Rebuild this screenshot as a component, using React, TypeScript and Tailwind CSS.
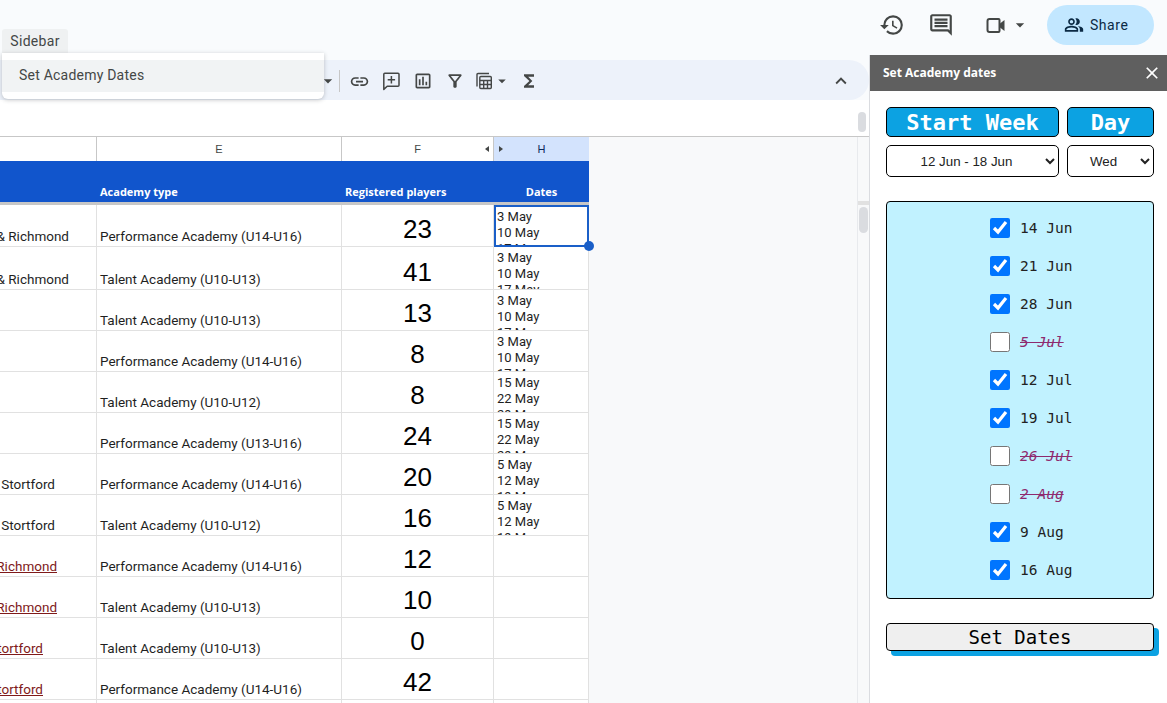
import React from "react";
import { MdHistory, MdOutlineComment, MdOutlinePeopleAlt, MdLink, MdOutlineAssessment, MdOutlineFilterAlt, MdFunctions, MdExpandLess, MdArrowDropDown, MdClose } from "react-icons/md";

const rows = [
  { h: "h-[42px]", a: "& Richmond", ap: "pr-[27px]", link: false, t: "Performance Academy (U14-U16)", n: 23, d: ["3 May", "10 May", "17 May"] },
  { h: "h-[43px]", a: "& Richmond", ap: "pr-[27px]", link: false, t: "Talent Academy (U10-U13)", n: 41, d: ["3 May", "10 May", "17 May"] },
  { h: "h-[41px]", a: "", ap: "", link: false, t: "Talent Academy (U10-U13)", n: 13, d: ["3 May", "10 May", "17 May"] },
  { h: "h-[41px]", a: "", ap: "", link: false, t: "Performance Academy (U14-U16)", n: 8, d: ["3 May", "10 May", "17 May"] },
  { h: "h-[41px]", a: "", ap: "", link: false, t: "Talent Academy (U10-U12)", n: 8, d: ["15 May", "22 May", "29 May"] },
  { h: "h-[41px]", a: "", ap: "", link: false, t: "Performance Academy (U13-U16)", n: 24, d: ["15 May", "22 May", "29 May"] },
  { h: "h-[41px]", a: "Bishop's Stortford", ap: "pr-[41px]", link: false, t: "Performance Academy (U14-U16)", n: 20, d: ["5 May", "12 May", "19 May"] },
  { h: "h-[41px]", a: "Bishop's Stortford", ap: "pr-[41px]", link: false, t: "Talent Academy (U10-U12)", n: 16, d: ["5 May", "12 May", "19 May"] },
  { h: "h-[41px]", a: "Twickenham & Richmond", ap: "pr-[39px]", link: true, t: "Performance Academy (U14-U16)", n: 12, d: [] },
  { h: "h-[41px]", a: "Twickenham & Richmond", ap: "pr-[39px]", link: true, t: "Talent Academy (U10-U13)", n: 10, d: [] },
  { h: "h-[41px]", a: "Bishop's Stortford", ap: "pr-[53px]", link: true, t: "Talent Academy (U10-U13)", n: 0, d: [] },
  { h: "h-[41px]", a: "Bishop's Stortford", ap: "pr-[53px]", link: true, t: "Performance Academy (U14-U16)", n: 42, d: [] },
];

const dates = [
  { l: "14 Jun", on: true },
  { l: "21 Jun", on: true },
  { l: "28 Jun", on: true },
  { l: "5 Jul", on: false },
  { l: "12 Jul", on: true },
  { l: "19 Jul", on: true },
  { l: "26 Jul", on: false },
  { l: "2 Aug", on: false },
  { l: "9 Aug", on: true },
  { l: "16 Aug", on: true },
];

const mono = "font-['DejaVu_Sans_Mono','Liberation_Mono',monospace]";

function CalcIcon() {
  return (
    <svg width="20" height="20" viewBox="0 0 20 20" fill="none" stroke="#444746" strokeWidth="1.4">
      <path d="M3 15.5V3.5C3 2.9 3.4 2.5 4 2.5H15" />
      <rect x="5.8" y="5.5" width="11.5" height="12" rx="1" />
      <path d="M5.8 9.5H17.3M5.8 13.5H17.3M9.7 9.5V17.5M13.5 9.5V17.5" />
    </svg>
  );
}

function VideoIcon() {
  return (
    <svg width="22" height="22" viewBox="0 0 22 22" fill="none" stroke="#444746" strokeWidth="2">
      <path d="M4.5 5H13.5C14.1 5 14.5 5.4 14.5 6V17C14.5 17.6 14.1 18 13.5 18H4.5C3.4 18 2.5 17.1 2.5 16V7C2.5 5.9 3.4 5 4.5 5Z" />
      <path d="M15 9.5L19.5 6V17L15 13.5Z" fill="#444746" stroke="none" />
    </svg>
  );
}

function AddCommentIcon() {
  return (
    <svg width="20" height="20" viewBox="0 0 20 20" fill="none" stroke="#444746" strokeWidth="1.5">
      <path d="M2.8 3.2C2.8 2.6 3.2 2.2 3.8 2.2H17C17.6 2.2 18 2.6 18 3.2V14.2C18 14.8 17.6 15.2 17 15.2H6.2L2.8 18.4Z" strokeLinejoin="round" />
      <path d="M10.4 5V12.4M6.7 8.7H14.1" />
    </svg>
  );
}

export default function App() {
  return (
    <div className="relative flex h-[703px] w-[1167px] flex-col overflow-hidden bg-[#f9fbfd] font-['Roboto',sans-serif] text-[#1f1f1f]">
      {/* top bar */}
      <div className="flex h-[55px] shrink-0">
        <div className="ml-[2px] mt-[29px] flex h-[24px] w-[66px] items-center justify-center rounded-t-[3px] bg-[#eff1f2] text-[14px] tracking-[0.3px] text-[#444746]">
          Sidebar
        </div>
        <div className="ml-auto mr-[13px] mt-[5px] flex h-[40px] items-center self-start text-[#444746]">
          <MdHistory size={26} />
          <MdOutlineComment size={26} className="ml-[23px]" />
          <div className="ml-[31px]"><VideoIcon /></div>
          <MdArrowDropDown size={20} className="ml-[3px]" />
          <div className="ml-[17px] flex h-[40px] w-[107px] items-center rounded-full bg-[#c2e7ff] pl-[17px] text-[14px] text-[#0b2a44]">
            <MdOutlinePeopleAlt size={20} />
            <span className="ml-[6px] tracking-[0.55px]">Share</span>
          </div>
        </div>
      </div>

      {/* menu overlay */}
      <div className="absolute left-[2px] top-[53px] z-20 h-[46px] w-[322px] rounded-b-[6px] bg-white pt-[7px] shadow-[0_1px_4px_rgba(60,64,67,0.3)]">
        <div className="flex h-[32px] items-center bg-[#f1f3f4] pb-[2px] pl-[17px] text-[14px] tracking-[0.22px] text-[#444746]">Set Academy Dates</div>
      </div>

      <div className="flex min-h-0 flex-1">
        {/* sheet */}
        <div className="flex w-[869px] shrink-0 flex-col">
          <div className="mt-[5px] flex h-[40px] shrink-0 items-center rounded-r-[20px] bg-[#edf2fa] pt-[2px] text-[#444746]">
            <div className="w-[321px] shrink-0" />
            <MdArrowDropDown size={20} className="-ml-[3px]" />
            <div className="ml-[1px] h-[22px] w-px bg-[#c7c7c7]" />
            <MdLink size={21} className="ml-[9px]" />
            <div className="ml-[11px]"><AddCommentIcon /></div>
            <MdOutlineAssessment size={20} className="ml-[12px]" />
            <MdOutlineFilterAlt size={20} className="ml-[12px]" />
            <div className="ml-[9px]"><CalcIcon /></div>
            <MdArrowDropDown size={18} className="-ml-[1px]" />
            <MdFunctions size={20} className="ml-[8px]" />
            <MdExpandLess size={22} className="ml-auto mr-[17px]" />
          </div>
          <div className="flex h-[36px] shrink-0 justify-end bg-white">
            <div className="mr-[3px] mt-[12px] h-[20px] w-[8px] rounded-[4px] bg-[#dadce0]" />
          </div>
          <div className="flex min-h-0 flex-1 border-t border-[#c7c7c7] bg-[#f8f9fa]">
            <div className="w-[589px] shrink-0">
              {/* col headers */}
              <div className="grid h-[24px] grid-cols-[97px_245px_152px_95px] bg-white font-['Liberation_Sans',sans-serif] text-[11px] text-[#444746]">
                <div className="border-r border-[#c7c7c7]" />
                <div className="flex items-center justify-center border-r border-[#c7c7c7]">E</div>
                <div className="relative flex items-center justify-center border-r border-[#c7c7c7]">
                  F
                  <span className="absolute right-[4px] top-[9px] h-0 w-0 border-y-[3px] border-r-[4px] border-y-transparent border-r-[#444746]" />
                </div>
                <div className="relative flex items-center justify-center bg-[#d3e3fd] text-[#0b2a5b]">
                  H
                  <span className="absolute left-[5px] top-[9px] h-0 w-0 border-y-[3px] border-l-[4px] border-y-transparent border-l-[#444746]" />
                </div>
              </div>
              {/* blue header */}
              <div className="grid h-[41px] grid-cols-[97px_245px_152px_95px] bg-[#1155cc] font-['Open_Sans',sans-serif] text-[11px] font-bold text-white">
                <div />
                <div className="flex items-end pb-[2px] pl-[3px]">Academy type</div>
                <div className="flex items-end pb-[2px] pl-[3px]">Registered players</div>
                <div className="flex items-end justify-center pb-[2px]">Dates</div>
              </div>
              <div className="h-[3px] bg-[#c7c7c7]" />
              {/* rows */}
              {rows.map((r, i) => (
                <div key={i} className={`grid ${r.h} grid-cols-[97px_245px_152px_95px] grid-rows-1 border-b border-[#e1e1e1] bg-white text-[13.5px] text-[#1f1f1f]`}>
                  <div className={`flex items-end justify-end overflow-hidden whitespace-nowrap border-r border-[#e1e1e1] ${r.ap}`}>
                    {r.link ? <span className="text-[#7f1a1a] underline">{r.a}</span> : r.a}
                  </div>
                  <div className="flex items-end overflow-hidden whitespace-nowrap border-r border-[#e1e1e1] pl-[3px]">{r.t}</div>
                  <div className="flex items-end justify-center border-r border-[#e1e1e1] font-['Liberation_Sans',sans-serif] text-[26px] leading-[34px] text-black">{r.n}</div>
                  <div className={`relative ${i === 0 ? "z-10 -mb-px border-2 border-[#1a5fc8] pl-[1px] pt-[2px]" : "overflow-hidden border-r border-[#e1e1e1] pl-[3px] pt-[3px]"} text-[13px] leading-[16px]`}>
                    {i === 0 ? (
                      <>
                        <div className="h-full overflow-hidden">{r.d.map((x) => <div key={x}>{x}</div>)}</div>
                        <span className="absolute -bottom-[6px] -right-[7px] h-[10px] w-[10px] rounded-full bg-[#1a5fc8]" />
                      </>
                    ) : (
                      r.d.map((x) => <div key={x}>{x}</div>)
                    )}
                  </div>
                </div>
              ))}
              <div className="grid h-[10px] grid-cols-[97px_245px_152px_95px] bg-white">
                <div className="border-r border-[#e1e1e1]" />
                <div className="border-r border-[#e1e1e1]" />
                <div className="border-r border-[#e1e1e1]" />
                <div className="border-r border-[#e1e1e1]" />
              </div>
            </div>
            <div className="flex-1" />
            <div className="flex w-[12px] shrink-0 flex-col border-l border-[#e8eaed] bg-[#f8f9fa]">
              <div className="h-[64px] bg-[#f8f9fa]" />
              <div className="h-[4px] bg-[#e1e1e1]" />
              <div className="ml-[1px] mt-[2px] h-[26px] w-[9px] rounded-[5px] bg-[#dadce0]" />
            </div>
          </div>
        </div>

        {/* side panel */}
        <div className="flex w-[298px] shrink-0 flex-col border-l border-[#dadce0] bg-white">
          <div className="flex h-[36px] shrink-0 items-center justify-between bg-[#5f5f5f] pl-[13px] pr-[5px] font-['Open_Sans',sans-serif] text-[12px] font-bold text-white">
            <span>Set Academy dates</span>
            <MdClose size={20} />
          </div>
          <div className="flex flex-1 flex-col pl-[16px] pr-[13px] pt-[16px]">
            <div className="grid grid-cols-[173px_87px] gap-x-[8px] gap-y-[8px]">
              <div className={`flex h-[30px] items-center justify-center rounded-[5px] border border-black bg-[#0ca2e2] text-[22px] font-bold text-white ${mono}`}>Start Week</div>
              <div className={`flex h-[30px] items-center justify-center rounded-[5px] border border-black bg-[#0ca2e2] text-[22px] font-bold text-white ${mono}`}>Day</div>
              <select defaultValue="a" className="h-[32px] w-full rounded-[5px] border border-black bg-white text-center font-['Liberation_Sans',sans-serif] text-[13.33px] text-[#222]">
                <option value="a">12 Jun - 18 Jun</option>
              </select>
              <select defaultValue="w" className="h-[32px] w-full rounded-[5px] border border-black bg-white pr-[2px] text-center font-['Liberation_Sans',sans-serif] text-[13.33px] text-[#222]">
                <option value="w">Wed</option>
              </select>
            </div>
            <div className="mt-[24px] flex h-[398px] flex-col items-start rounded-[4px] border border-black bg-[#c1f2ff] pl-[103px] pt-[7px]">
              {dates.map((d) => (
                <label key={d.l} className={`flex h-[38px] shrink-0 items-center text-[14.5px] ${mono} ${d.on ? "text-[#222]" : "italic text-[#8e2a6e] line-through"}`}>
                  <input type="checkbox" defaultChecked={d.on} className="mr-[10px] h-[20px] w-[20px] accent-[#0075ff]" />
                  <span className="whitespace-pre pt-[2px]">{d.l}</span>
                </label>
              ))}
            </div>
            <button className={`mt-[24px] flex h-[28px] items-center justify-center rounded-[4px] border border-black bg-[#efefef] text-[19px] text-black shadow-[5px_5px_0_#0ca2e2] ${mono}`}>Set Dates</button>
          </div>
        </div>
      </div>
    </div>
  );
}
